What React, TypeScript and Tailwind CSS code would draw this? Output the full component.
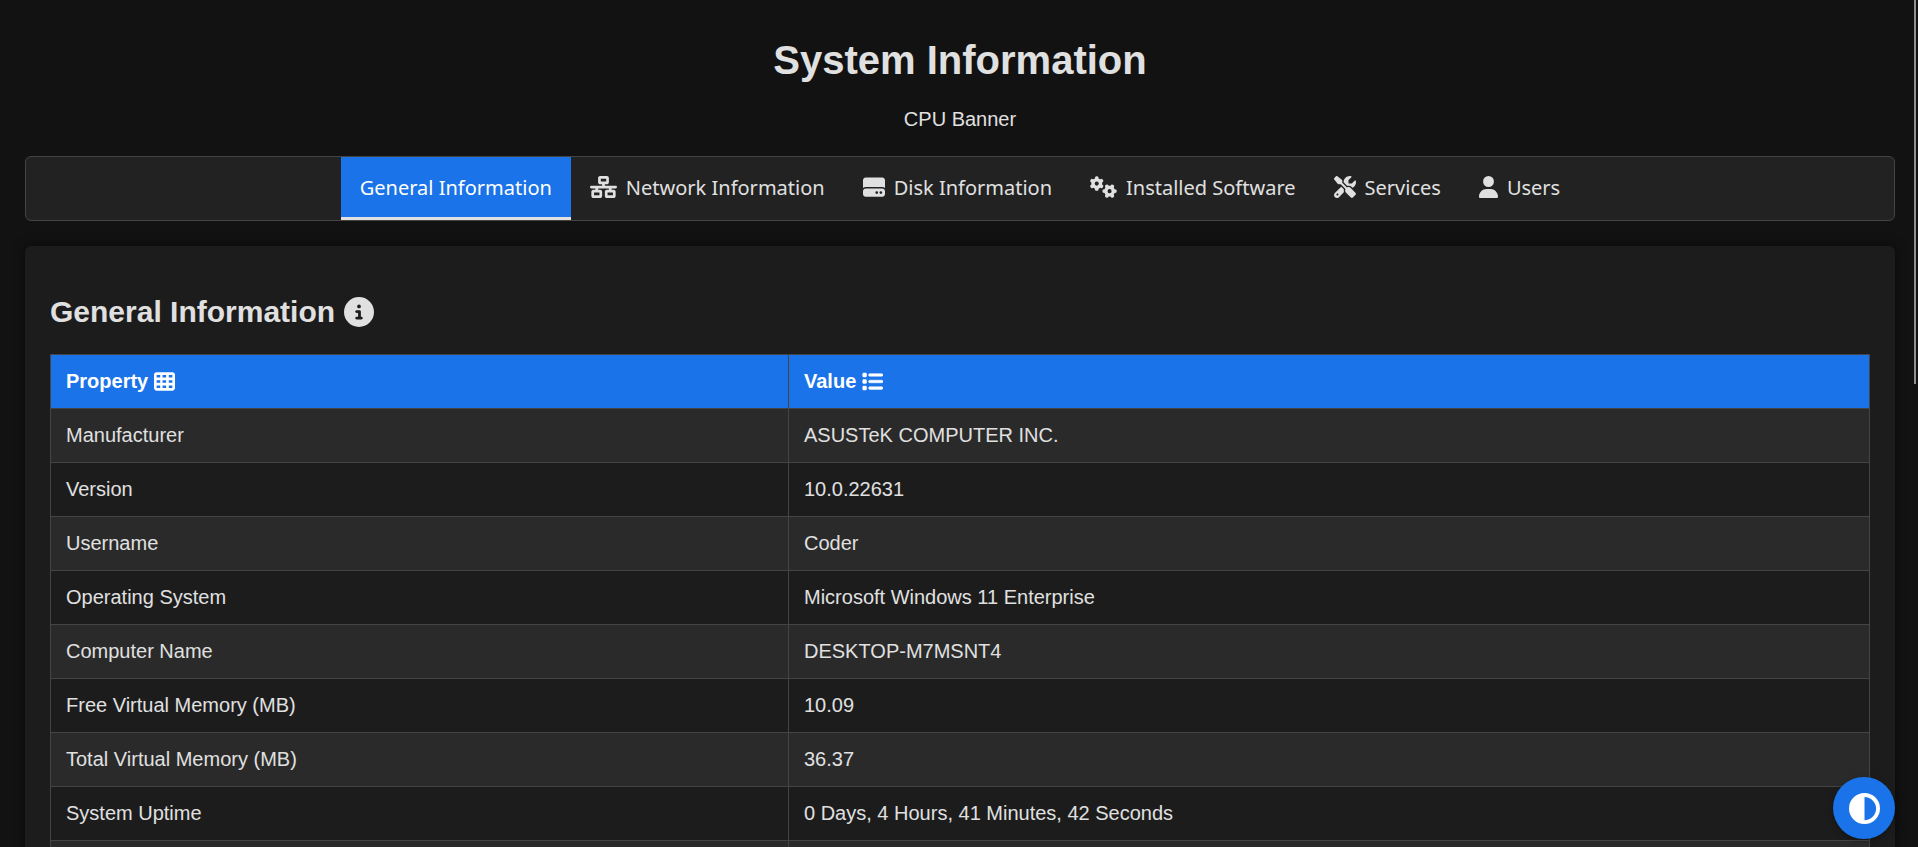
import { useState } from "react";
import type { IconType } from "react-icons";
import {
  FaCircleHalfStroke,
  FaCircleInfo,
  FaGears,
  FaHardDrive,
  FaList,
  FaNetworkWired,
  FaScrewdriverWrench,
  FaTableCells,
  FaUser,
} from "react-icons/fa6";

type Tab = { label: string; icon?: IconType; size?: string };

const tabs: Tab[] = [
  { label: "General Information" },
  { label: "Network Information", icon: FaNetworkWired, size: "w-[27px] h-[22px]" },
  { label: "Disk Information", icon: FaHardDrive, size: "w-[22px] h-[22px]" },
  { label: "Installed Software", icon: FaGears, size: "w-[27px] h-[22px]" },
  { label: "Services", icon: FaScrewdriverWrench, size: "w-[22px] h-[22px]" },
  { label: "Users", icon: FaUser, size: "w-[19px] h-[22px]" },
];

const rows: [string, string][] = [
  ["Manufacturer", "ASUSTeK COMPUTER INC."],
  ["Version", "10.0.22631"],
  ["Username", "Coder"],
  ["Operating System", "Microsoft Windows 11 Enterprise"],
  ["Computer Name", "DESKTOP-M7MSNT4"],
  ["Free Virtual Memory (MB)", "10.09"],
  ["Total Virtual Memory (MB)", "36.37"],
  ["System Uptime", "0 Days, 4 Hours, 41 Minutes, 42 Seconds"],
  ["", ""],
];

export default function App() {
  const [active, setActive] = useState(0);

  return (
    <div className="h-screen overflow-hidden bg-[#121212] pl-[25px] pr-[23px] pt-[37px] font-['Liberation_Sans',Arial,sans-serif] text-xl leading-[23px] text-[#e0e0e0]">
      <header className="text-center">
        <h1 className="text-[40px] font-bold leading-[46px]">System Information</h1>
        <p className="mt-[25px]">CPU Banner</p>
      </header>

      <nav className="mt-[25px] flex justify-center rounded-md border border-[#444] bg-[#222]">
        {tabs.map(({ label, icon: Icon, size }, i) => (
          <button
            key={label}
            type="button"
            onClick={() => setActive(i)}
            className={`flex h-[63px] items-center gap-[9px] border-b-[3px] px-[19px] font-['Noto_Sans',sans-serif] ${
              i === active ? "border-[#e0e0e0] bg-[#1a73e8] text-white" : "border-transparent"
            }`}
          >
            {Icon && <Icon className={size} preserveAspectRatio="none" />}
            <span>{label}</span>
          </button>
        ))}
      </nav>

      <main className="mt-[25px] rounded-md bg-[#1c1c1c] px-[25px] pb-[25px] pt-12 shadow-[0_0_12px_rgba(0,0,0,0.5)]">
        <h2 className="flex items-center gap-[9px] text-[30px] font-bold leading-[35px]">
          General Information
          <FaCircleInfo />
        </h2>
        <table className="mt-[25px] w-full border-collapse text-left">
          <thead className="bg-[#1a73e8] text-white">
            <tr>
              <th className="h-[54px] w-[738px] border border-[#444] px-[15px]">
                <span className="flex items-center gap-1.5">
                  Property <FaTableCells className="size-[21px]" />
                </span>
              </th>
              <th className="border border-[#444] px-[15px]">
                <span className="flex items-center gap-1.5">
                  Value <FaList className="size-[21px]" stroke="currentColor" strokeWidth={12} />
                </span>
              </th>
            </tr>
          </thead>
          <tbody>
            {rows.map(([property, value], i) => (
              <tr key={i} className="odd:bg-[#2a2a2a]">
                <td className="h-[54px] border border-[#444] px-[15px]">{property}</td>
                <td className="border border-[#444] px-[15px]">{value}</td>
              </tr>
            ))}
          </tbody>
        </table>
      </main>

      <button
        type="button"
        aria-label="Toggle theme"
        className="fixed bottom-2 right-[23px] flex size-[62px] items-center justify-center rounded-full bg-[#1a73e8] text-[31px] text-white shadow-[0_2px_6px_rgba(0,0,0,0.3)]"
      >
        <FaCircleHalfStroke />
      </button>
      <div className="fixed right-0.5 top-0 h-[384px] w-0.5 bg-[#8f8f8f]" />
    </div>
  );
}
